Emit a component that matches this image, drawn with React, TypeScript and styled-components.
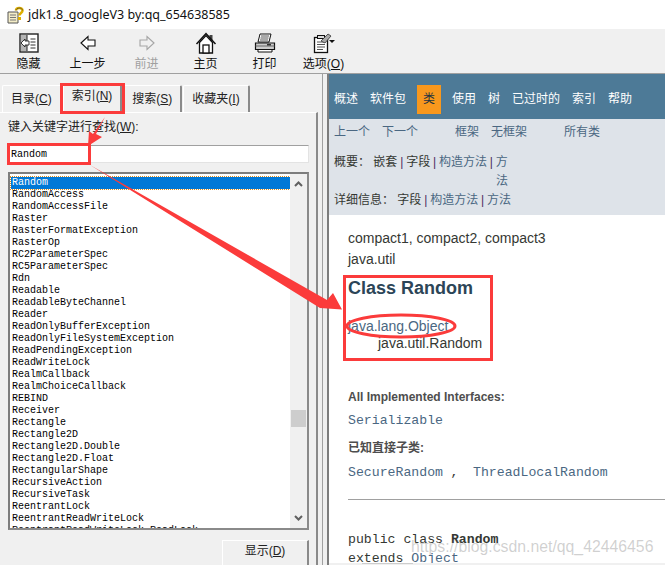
import styled, { createGlobalStyle } from 'styled-components';

const CJK = '"Liberation Sans", "Noto Sans CJK SC", sans-serif';
const MONO = '"Liberation Mono", "Noto Sans CJK SC", monospace';

const GlobalStyle = createGlobalStyle`
  html, body {
    margin: 0;
    padding: 0;
    background: #f0f0f0;
    overflow: hidden;
  }
`;

const Window = styled.div`
  position: relative;
  width: 665px;
  height: 565px;
  overflow: hidden;
  font-family: ${CJK};
  color: #000;
`;

const TitleBar = styled.div`
  height: 29px;
  background: #fff;
  display: flex;
  align-items: center;
  gap: 3px;
  padding-left: 7px;
  font-family: "Noto Sans", sans-serif;
  font-size: 12.5px;
  color: #111;
`;

const Toolbar = styled.div`
  height: 44px;
  background: #f0f0f0;
  border-bottom: 1px solid #a0a0a0;
  display: flex;
  margin-left: -1px;
`;

const ToolButton = styled.div<{ $disabled?: boolean }>`
  width: 59px;
  flex: none;
  display: flex;
  flex-direction: column;
  align-items: center;
  padding-top: 3px;
  font-size: 12px;
  line-height: 17px;
  white-space: nowrap;
  color: ${({ $disabled }) => ($disabled ? '#a0a0a0' : '#111')};
  & u { text-decoration: underline; }
  & svg { display: block; width: 22px; height: 22px; margin-bottom: 2px; }
`;

const Main = styled.div`
  display: flex;
  height: 491px;
`;

const LeftPane = styled.div`
  width: 323px;
  flex: none;
  padding-top: 9px;
  box-sizing: border-box;
  background: #f0f0f0;
  border-right: 1px solid #a0a0a0;
`;

const Tabs = styled.div`
  display: flex;
  align-items: flex-end;
  height: 29px;
  padding-left: 2px;
`;

const Tab = styled.div<{ $active?: boolean }>`
  height: ${({ $active }) => ($active ? '29px' : '27px')};
  box-sizing: border-box;
  padding: ${({ $active }) => ($active ? '4px 8px 0' : '5px 8px 0')};
  font-size: 12px;
  line-height: 17px;
  color: #222;
  background: #f0f0f0;
  border: 1px solid #fff;
  border-right: 2px solid #8a8a8a;
  border-bottom: none;
  border-radius: 2px 2px 0 0;
  margin-right: 1px;
  position: relative;
  & u { text-decoration: underline; }
`;

const TabPanel = styled.div`
  width: 318px;
  height: 453px;
  box-sizing: border-box;
  padding: 6px 7px 0 8px;
  border-top: 1px solid #fff;
  border-right: 2px solid #8a8a8a;
  font-size: 12px;
  color: #222;
`;

const FieldLabel = styled.div`
  line-height: 17px;
  & u { text-decoration: underline; }
`;

const SearchInput = styled.div`
  margin-top: 9px;
  height: 18px;
  box-sizing: border-box;
  background: #fff;
  border: 1px solid #a0a0a0;
  border-bottom-color: #e3e3e3;
  border-right-color: #e3e3e3;
  font-family: ${MONO};
  font-size: 10px;
  line-height: 18px;
  padding-left: 2px;
  color: #000;
`;

const ListBox = styled.div`
  margin-top: 9px;
  height: 358px;
  box-sizing: border-box;
  background: #fff;
  border: 2px solid #7d7d7d;
  border-right-color: #8a8a8a;
  border-bottom-color: #8a8a8a;
  display: flex;
`;

const ListItems = styled.div`
  flex: 1;
  overflow: hidden;
  padding: 3px 0 0 1px;
`;

const ListItem = styled.div<{ $selected?: boolean }>`
  height: 12px;
  line-height: 12px;
  font-family: ${MONO};
  font-size: 10px;
  padding-left: 1px;
  white-space: nowrap;
  color: ${({ $selected }) => ($selected ? '#fff' : '#000')};
  background: ${({ $selected }) => ($selected ? '#0078d7' : 'transparent')};
  outline: ${({ $selected }) => ($selected ? '1px dotted #d98c20' : 'none')};
`;

const ScrollBar = styled.div`
  width: 17px;
  flex: none;
  background: #f0f0f0;
  position: relative;
  color: #606060;
  & svg { position: absolute; left: 3px; width: 11px; height: 8px; }
`;

const ScrollThumb = styled.div`
  position: absolute;
  top: 236px;
  left: 1px;
  width: 15px;
  height: 17px;
  background: #cdcdcd;
`;

const ShowButton = styled.div`
  margin: 10px 0 0 214px;
  width: 87px;
  height: 30px;
  box-sizing: border-box;
  background: #f0f0f0;
  border: 1px solid #fff;
  border-right: 2px solid #8a8a8a;
  text-align: center;
  line-height: 21px;
  font-size: 12px;
  color: #222;
  & u { text-decoration: underline; }
`;

const Splitter = styled.div`
  width: 4px;
  flex: none;
  background: #f0f0f0;
`;

const RightPane = styled.div`
  flex: 1;
  background: #fff;
  border-left: 2px solid #7d7d7d;
  overflow: hidden;
  font-size: 12px;
  position: relative;
`;

const TopNav = styled.div`
  height: 45px;
  background: #4d7a97;
  display: flex;
  align-items: flex-start;
  padding: 11px 0 0 5px;
  box-sizing: border-box;
`;

const NavItem = styled.div<{ $active?: boolean }>`
  color: ${({ $active }) => ($active ? '#253441' : '#fff')};
  background: ${({ $active }) => ($active ? '#f8981d' : 'transparent')};
  height: 29px;
  line-height: 29px;
  padding: ${({ $active }) => ($active ? '0 6px' : '0')};
  margin: ${({ $active }) => ($active ? '0 11px 0 -1px' : '0 12px 0 0')};
  white-space: nowrap;
`;

const SubNav = styled.div`
  height: 96px;
  box-sizing: border-box;
  background: #dee3e9;
  padding: 4px 0 0 5px;
  color: #4a6782;
`;

const SubRow = styled.div<{ $mt?: number }>`
  display: flex;
  line-height: 19px;
  margin-top: ${({ $mt }) => $mt ?? 0}px;
  white-space: pre;
`;

const SubLink = styled.span<{ $gap?: number }>`
  margin-right: ${({ $gap }) => $gap ?? 12}px;
  white-space: nowrap;
`;

const Summary = styled.div`
  width: 186px;
  color: #4a6782;
`;

const SummaryLabel = styled.span`
  color: #353833;
`;

const WrappedWord = styled.div`
  padding-left: 162px;
`;

const Pipe = styled.span`
  color: #4c2a60;
  margin: 0 -0.5px;
`;

const Content = styled.div`
  padding: 13px 0 0 19px;
  color: #353833;
  font-size: 14px;
`;

const PlainLine = styled.div<{ $indent?: number; $mt?: number; $link?: boolean }>`
  line-height: 20px;
  padding-left: ${({ $indent }) => $indent ?? 0}px;
  margin-top: ${({ $mt }) => $mt ?? 0}px;
  color: ${({ $link }) => ($link ? '#4a6782' : '#353833')};
  white-space: nowrap;
`;

const ClassTitle = styled.h2`
  margin: 8px 0 0;
  font-size: 18px;
  line-height: 22px;
  font-weight: bold;
  color: #2c4557;
`;

const DefLabel = styled.div<{ $mt: number }>`
  margin-top: ${({ $mt }) => $mt}px;
  line-height: 16px;
  font-size: 12px;
  font-weight: bold;
  color: #4e4e4e;
`;

const CodeLine = styled.div<{ $mt: number }>`
  margin-top: ${({ $mt }) => $mt}px;
  font-family: ${MONO};
  font-size: 13.2px;
  line-height: 18px;
  color: #353833;
  white-space: pre;
  & a { color: #4a6782; }
  & b { font-weight: bold; }
`;

const Separator = styled.span`
  letter-spacing: -0.4px;
`;

const Rule = styled.div`
  margin-top: 17px;
  height: 1px;
  background: #a0a0a0;
`;

const Watermark = styled.div`
  position: absolute;
  left: 82px;
  top: 463px;
  font-family: "Liberation Sans", sans-serif;
  font-size: 15.8px;
  line-height: 20px;
  color: rgba(120, 120, 120, 0.35);
  white-space: nowrap;
`;

const BottomEdge = styled.div`
  position: absolute;
  left: 0;
  right: 0;
  bottom: 0;
  height: 2px;
  background: #f0f0f0;
`;

const BottomThumb = styled.div`
  width: 51px;
  height: 1px;
  margin-left: 33px;
  background: #cdcdcd;
`;

const Annotations = styled.svg`
  position: absolute;
  left: 0;
  top: 0;
  width: 665px;
  height: 565px;
  pointer-events: none;
`;

const LIST = [
  'Random', 'RandomAccess', 'RandomAccessFile', 'Raster', 'RasterFormatException', 'RasterOp',
  'RC2ParameterSpec', 'RC5ParameterSpec', 'Rdn', 'Readable', 'ReadableByteChannel', 'Reader',
  'ReadOnlyBufferException', 'ReadOnlyFileSystemException', 'ReadPendingException', 'ReadWriteLock',
  'RealmCallback', 'RealmChoiceCallback', 'REBIND', 'Receiver', 'Rectangle', 'Rectangle2D',
  'Rectangle2D.Double', 'Rectangle2D.Float', 'RectangularShape', 'RecursiveAction', 'RecursiveTask',
  'ReentrantLock', 'ReentrantReadWriteLock', 'ReentrantReadWriteLock.ReadLock',
];

function App() {
  return (
    <Window>
      <GlobalStyle />
      <TitleBar>
        <svg width="18" height="18" viewBox="0 0 18 18">
          <path d="M1 6h10v11H1z" fill="#f4edc8" stroke="#555" />
          <path d="M3 9h6M3 11.500h6M3 14h6" stroke="#777" />
          <path d="M9 4.500C9 1.500 15.500 1 15.500 4.500c0 2.500-3 2.500-3 5" fill="none" stroke="#e0b000" strokeWidth="2.600" />
          <rect x="11" y="11" width="3" height="3" fill="#e0b000" />
          <path d="M9 4.500C9 1.500 15.500 1 15.500 4.500" fill="none" stroke="#333" strokeWidth="0.600" />
        </svg>
        jdk1.8_googleV3 by:qq_654638585
      </TitleBar>
      <Toolbar>
        <ToolButton>
          <svg viewBox="0 0 22 22">
            <rect x="2" y="2" width="18" height="18" fill="#fff" stroke="#222" strokeWidth="1.400" />
            <rect x="3" y="3" width="6" height="16" fill="#b5b5b5" />
            <path d="M9 3v16" stroke="#222" />
            <path d="M3 11l4-4v2h4v4H7v2z" fill="#fff" stroke="#222" strokeWidth="0.900" />
            <path d="M12.500 7h5M12.500 10h5M12.500 13h5M12.500 16h5" stroke="#333" />
          </svg>
          隐藏
        </ToolButton>
        <ToolButton>
          <svg viewBox="0 0 22 22">
            <path d="M4 11l7-6.500V8h7v6h-7v3.500z" fill="#fff" stroke="#111" strokeWidth="1.100" />
          </svg>
          上一步
        </ToolButton>
        <ToolButton $disabled>
          <svg viewBox="0 0 22 22">
            <path d="M18 11l-7-6.500V8H4v6h7v3.500z" fill="#f0f0f0" stroke="#a5a5a5" strokeWidth="1.100" />
          </svg>
          前进
        </ToolButton>
        <ToolButton>
          <svg viewBox="0 0 22 22">
            <path d="M14.500 3h3v6h-3z" fill="#444" />
            <path d="M1.500 12L11 1.500 20.500 12" fill="none" stroke="#111" strokeWidth="1.500" />
            <path d="M4.500 10.500V21h13V10.500L11 3.500z" fill="#fff" stroke="#111" strokeWidth="1.300" />
            <rect x="8" y="13" width="6" height="8" fill="#fff" stroke="#111" strokeWidth="1.300" />
          </svg>
          主页
        </ToolButton>
        <ToolButton>
          <svg viewBox="0 0 22 22">
            <path d="M6 2h11l-2 8H4z" fill="#fff" stroke="#111" />
            <path d="M7 4h8M6.500 6h8M6 8h8" stroke="#555" />
            <path d="M1.500 11h19v6.500h-19z" fill="#ccc" stroke="#111" strokeWidth="1.200" />
            <path d="M1.500 14h19" stroke="#666" />
            <path d="M4 17.500h14V20H4z" fill="#fff" stroke="#111" />
            <rect x="13" y="12" width="4" height="1.500" fill="#333" />
          </svg>
          打印
        </ToolButton>
        <ToolButton>
          <svg viewBox="0 0 22 22">
            <rect x="1.500" y="5.500" width="13" height="15" fill="#fff" stroke="#111" strokeWidth="1.300" />
            <rect x="4.500" y="3.500" width="7" height="3" fill="#ddd" stroke="#111" />
            <path d="M4 10h8M4 12.500h8M4 15h8M4 17.500h6" stroke="#555" />
            <path d="M8 9l7-7 3 2-6 7z" fill="#aaa" stroke="#333" strokeWidth="0.800" />
            <path d="M16 8h6l-3 3z" fill="#111" />
          </svg>
          <span>选项(<u>O</u>)</span>
        </ToolButton>
      </Toolbar>
      <Main>
        <LeftPane>
          <Tabs>
            <Tab>目录(<u>C</u>)</Tab>
            <Tab $active>索引(<u>N</u>)</Tab>
            <Tab>搜索(<u>S</u>)</Tab>
            <Tab>收藏夹(<u>I</u>)</Tab>
          </Tabs>
          <TabPanel>
            <FieldLabel>键入关键字进行查找(<u>W</u>):</FieldLabel>
            <SearchInput>Random</SearchInput>
            <ListBox>
              <ListItems>
                {LIST.map((name, i) => (
                  <ListItem key={name} $selected={i === 0}>{name}</ListItem>
                ))}
              </ListItems>
              <ScrollBar>
                <svg viewBox="0 0 11 8" style={{ top: 6 }}>
                  <path d="M2 6l3.500-3.500L9 6" fill="none" stroke="currentColor" strokeWidth="2" />
                </svg>
                <ScrollThumb />
                <svg viewBox="0 0 11 8" style={{ bottom: 6 }}>
                  <path d="M2 2l3.500 3.500L9 2" fill="none" stroke="currentColor" strokeWidth="2" />
                </svg>
              </ScrollBar>
            </ListBox>
            <ShowButton>显示(<u>D</u>)</ShowButton>
          </TabPanel>
        </LeftPane>
        <Splitter />
        <RightPane>
          <TopNav>
            <NavItem>概述</NavItem>
            <NavItem>软件包</NavItem>
            <NavItem $active>类</NavItem>
            <NavItem>使用</NavItem>
            <NavItem>树</NavItem>
            <NavItem>已过时的</NavItem>
            <NavItem>索引</NavItem>
            <NavItem>帮助</NavItem>
          </TopNav>
          <SubNav>
            <SubRow>
              <SubLink>上一个</SubLink>
              <SubLink $gap={37}>下一个</SubLink>
              <SubLink>框架</SubLink>
              <SubLink $gap={37}>无框架</SubLink>
              <SubLink>所有类</SubLink>
            </SubRow>
            <SubRow $mt={11}>
              <Summary>
                <SummaryLabel>概要： 嵌套 <Pipe>|</Pipe> 字段 <Pipe>|</Pipe></SummaryLabel> 构造方法 <Pipe>|</Pipe> 方
                <WrappedWord>法</WrappedWord>
              </Summary>
            </SubRow>
            <SubRow>
              <SummaryLabel>详细信息： 字段 <Pipe>|</Pipe> </SummaryLabel>构造方法 <Pipe>|</Pipe> 方法
            </SubRow>
          </SubNav>
          <Content>
            <PlainLine>compact1, compact2, compact3</PlainLine>
            <PlainLine $mt={1}>java.util</PlainLine>
            <ClassTitle>Class Random</ClassTitle>
            <PlainLine $mt={17} $link>java.lang.Object</PlainLine>
            <PlainLine $indent={30} $mt={-3}>java.util.Random</PlainLine>
            <DefLabel $mt={36}>All Implemented Interfaces:</DefLabel>
            <CodeLine $mt={7}><a>Serializable</a></CodeLine>
            <DefLabel $mt={10}>已知直接子类:</DefLabel>
            <CodeLine $mt={8}><a>SecureRandom</a><Separator> ,  </Separator><a>ThreadLocalRandom</a></CodeLine>
            <Rule />
            <CodeLine $mt={31}>public class <b>Random</b></CodeLine>
            <CodeLine $mt={1}>extends <a>Object</a></CodeLine>
          </Content>
          <Watermark>https://blog.csdn.net/qq_42446456</Watermark>
          <BottomEdge><BottomThumb /></BottomEdge>
        </RightPane>
      </Main>
      <Annotations viewBox="0 0 665 565">
        <g fill="none" stroke="#fb3b3b" strokeWidth="3">
          <rect x="61.500" y="84.500" width="62" height="28" />
          <rect x="8.500" y="144.500" width="81" height="19" />
          <rect x="344.500" y="276.500" width="147" height="83" />
          <ellipse cx="401" cy="326" rx="54" ry="11" />
        </g>
        <path d="M105 117L96 134L102 137L88 146L89 131L93 134z" fill="#fb3b3b" />
        <path d="M90 165L327 300L333 293L342 309.500L320 308z" fill="#fb3b3b" />
      </Annotations>
    </Window>
  );
}

export default App;
